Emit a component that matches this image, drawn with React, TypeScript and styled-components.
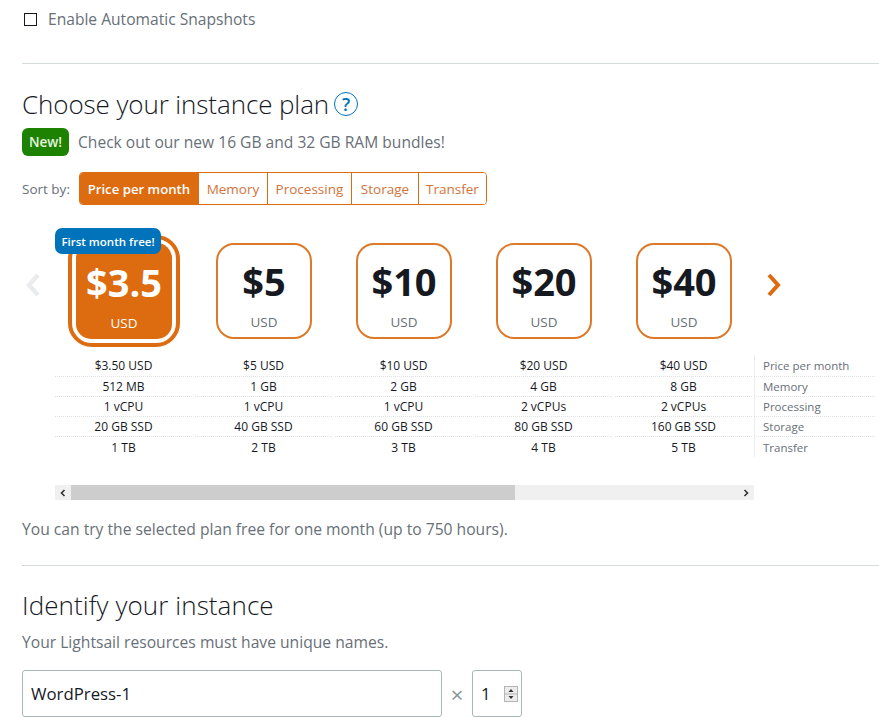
import React from "react";
import styled, { createGlobalStyle } from "styled-components";

const Global = createGlobalStyle`
  html, body { margin: 0; padding: 0; background: #fff; overflow: hidden; }
  body { font-family: "Open Sans", "Noto Sans", "Liberation Sans", sans-serif; color: #545b64; }
`;
const Page = styled.div`
  width: 879px; height: 718px; padding-left: 22px; box-sizing: border-box; overflow: hidden;
`;
const CheckRow = styled.label`
  display: flex; align-items: center; height: 38px; font-size: 15.6px; color: #687078;
`;
const CheckBox = styled.span`
  width: 11px; height: 11px; border: 1px solid #16191f; margin: 1px 11px 0 2px; display: block;
`;
const Rule = styled.hr<{ $top: number }>`
  border: 0; border-top: 1px solid #d5dbdb; margin: ${p => p.$top}px 0 0; height: 0;
`;
const Heading = styled.h2<{ $top: number; $spacing: number }>`
  margin: ${p => p.$top}px 0 0; font-weight: 300; font-size: 26px; letter-spacing: ${p => p.$spacing}px; line-height: 36px; color: #16191f;
  display: flex; align-items: center; gap: 5px;
`;
const Help = styled.span`
  width: 22px; height: 22px; border: 1.5px solid #0073bb; border-radius: 50%; color: #0073bb;
  display: flex; align-items: center; justify-content: center; font-size: 18px; font-weight: 600; line-height: 1;
  letter-spacing: 0;
`;
const NewRow = styled.div`
  display: flex; align-items: center; gap: 9px; margin-top: 6px; font-size: 15.6px; color: #687078;
`;
const Badge = styled.span`
  background: #1d8102; border-radius: 6px; width: 47px; height: 28px; font-size: 13.5px;
  font-weight: 600; display: flex; align-items: center; justify-content: center; color: #e4f5de;
`;
const SortRow = styled.div`
  display: flex; align-items: center; margin-top: 16px; font-size: 13.5px; color: #687078; gap: 9px;
`;
const Segments = styled.div`
  display: flex; height: 33px; border: 1px solid #dd6b10; border-radius: 4px; box-sizing: border-box; overflow: hidden;
`;
const Segment = styled.span<{ $on?: boolean; $w: number }>`
  width: ${p => p.$w}px; display: flex; align-items: center; justify-content: center; box-sizing: border-box;
  font-size: ${p => (p.$on ? 13.2 : 13.5)}px; white-space: nowrap;
  background: ${p => (p.$on ? "#dd6b10" : "#fff")}; color: ${p => (p.$on ? "#fff" : "#d2733a")};
  font-weight: ${p => (p.$on ? 600 : 400)};
  border-right: 1px solid #dd6b10;
  &:last-child { border-right: 0; }
`;
const Carousel = styled.div`
  display: grid; grid-template-columns: 32px repeat(5, 140px) 40px; margin-top: 30px; height: 112px; align-items: center;
`;
const Arrow = styled.svg<{ $push: number }>`
  width: 16px; height: 24px; display: block; margin-left: ${p => p.$push}px; margin-top: -12px;
`;
const CardSlot = styled.div`
  position: relative; display: flex; justify-content: center; align-items: center;
`;
const Card = styled.div`
  width: 96px; height: 96px; box-sizing: border-box; border: 2px solid #dd7a2a; border-radius: 18px;
  display: flex; flex-direction: column; align-items: center; background: #fff;
`;
const SelectedCard = styled.div`
  width: 112px; height: 112px; box-sizing: border-box; border: 4px solid #dd6b10; border-radius: 24px;
  padding: 4px; background: #fff;
`;
const SelectedFill = styled.div`
  box-sizing: border-box; height: 96px; background: #dd6b10; border-radius: 15px;
  display: flex; flex-direction: column; align-items: center;
`;
const Price = styled.div<{ $on?: boolean }>`
  font-size: 38px; font-weight: 700; line-height: 46px; margin-top: ${p => (p.$on ? 16 : 13)}px;
  color: ${p => (p.$on ? "#fff" : "#16191f")};
`;
const Unit = styled.div<{ $on?: boolean }>`
  font-size: 13.5px; line-height: 18px; margin-top: 9px;
  color: ${p => (p.$on ? "#fff" : "#687078")};
`;
const Promo = styled.span`
  position: absolute; left: 1px; top: -7px; height: 26px; width: 106px; background: #0073bb; color: #fff;
  border-radius: 7px; font-size: 11.5px; font-weight: 600; display: flex; align-items: center; justify-content: center;
  white-space: nowrap;
`;
const Table = styled.div`
  margin: 8px 0 0 33px;
`;
const SpecRow = styled.div<{ $h: number }>`
  display: grid; grid-template-columns: repeat(5, 140px) 120px; height: ${p => p.$h}px; align-items: center;
`;
const Cell = styled.div<{ $line: boolean }>`
  height: 100%; padding: 0 1px; box-sizing: border-box;
  display: flex; align-items: center; justify-content: center; font-size: 12px; color: #16191f;
  border-bottom: ${p => (p.$line ? "1px dotted #dfe3e3" : "0")};
  margin-right: 3px;
`;
const RowLabel = styled.div<{ $line: boolean }>`
  height: 100%; box-sizing: border-box; display: flex; align-items: center; padding-left: 8px; margin-left: -1px;
  font-size: 11.5px; color: #687078; border-left: 1px solid #eaeded;
  border-bottom: ${p => (p.$line ? "1px dotted #dfe3e3" : "0")};
`;
const ScrollTrack = styled.div`
  margin: 28px 0 0 33px; width: 699px; height: 15px; background: #f0f0f0; display: flex; align-items: center;
`;
const ScrollButton = styled.span`
  width: 16px; height: 15px; display: flex; align-items: center; justify-content: center; flex: none;
`;
const ScrollThumb = styled.span`
  width: 444px; height: 15px; background: #cdcdcd; flex: none;
`;
const ScrollGap = styled.span`
  flex: 1;
`;
const Note = styled.p<{ $top: number }>`
  margin: ${p => p.$top}px 0 0; font-size: 15.65px; line-height: 20px; color: #687078;
`;
const InputRow = styled.div`
  display: flex; align-items: center; margin-top: 18px;
`;
const NameInput = styled.div`
  width: 420px; height: 47px; box-sizing: border-box; border: 1px solid #aab7b8; border-radius: 3px;
  display: flex; align-items: center; padding-left: 8px; font-size: 16.8px; color: #16191f;
`;
const Times = styled.span`
  width: 30px; text-align: center; font-size: 22px; line-height: 1; color: #879596;
`;
const NumberInput = styled.div`
  width: 50px; height: 47px; box-sizing: border-box; border: 1px solid #aab7b8; border-radius: 3px;
  display: flex; align-items: center; justify-content: space-between; padding: 0 2px 0 8px; font-size: 16.8px; color: #16191f;
`;
const Spinner = styled.svg`
  width: 14px; height: 16px; display: block; margin-right: 1px;
`;

const plans = [
  { price: "$3.5", on: true, specs: ["$3.50 USD", "512 MB", "1 vCPU", "20 GB SSD", "1 TB"] },
  { price: "$5", specs: ["$5 USD", "1 GB", "1 vCPU", "40 GB SSD", "2 TB"] },
  { price: "$10", specs: ["$10 USD", "2 GB", "1 vCPU", "60 GB SSD", "3 TB"] },
  { price: "$20", specs: ["$20 USD", "4 GB", "2 vCPUs", "80 GB SSD", "4 TB"] },
  { price: "$40", specs: ["$40 USD", "8 GB", "2 vCPUs", "160 GB SSD", "5 TB"] },
];
const labels = ["Price per month", "Memory", "Processing", "Storage", "Transfer"];
const heights = [22, 20, 20, 20, 20];
const sorts = [
  { t: "Price per month", w: 119, on: true }, { t: "Memory", w: 69 }, { t: "Processing", w: 84 },
  { t: "Storage", w: 67 }, { t: "Transfer", w: 67 },
];

export default function App() {
  return (
    <Page>
      <Global />
      <CheckRow><CheckBox />Enable Automatic Snapshots</CheckRow>
      <Rule $top={25} />
      <Heading $top={22} $spacing={-0.1}>Choose your instance plan<Help>?</Help></Heading>
      <NewRow><Badge>New!</Badge>Check out our new 16 GB and 32 GB RAM bundles!</NewRow>
      <SortRow>
        Sort by:
        <Segments>
          {sorts.map(s => <Segment key={s.t} $w={s.w} $on={s.on}>{s.t}</Segment>)}
        </Segments>
      </SortRow>
      <Carousel>
        <Arrow $push={2} viewBox="0 0 16 24"><path d="M14 2 L5 12 L14 22" fill="none" stroke="#e9ebed" strokeWidth="4.5" /></Arrow>
        {plans.map(p => (
          <CardSlot key={p.price}>
            {p.on ? (
              <>
                <SelectedCard>
                  <SelectedFill><Price $on>{p.price}</Price><Unit $on>USD</Unit></SelectedFill>
                </SelectedCard>
                <Promo>First month free!</Promo>
              </>
            ) : (
              <Card><Price>{p.price}</Price><Unit>USD</Unit></Card>
            )}
          </CardSlot>
        ))}
        <Arrow $push={12} viewBox="0 0 16 24"><path d="M3 2 L12 12 L3 22" fill="none" stroke="#dd6b10" strokeWidth="4" /></Arrow>
      </Carousel>
      <Table>
        {labels.map((l, i) => (
          <SpecRow key={l} $h={heights[i]}>
            {plans.map(p => <Cell key={p.price} $line={i < 4}>{p.specs[i]}</Cell>)}
            <RowLabel $line={i < 4}>{l}</RowLabel>
          </SpecRow>
        ))}
      </Table>
      <ScrollTrack>
        <ScrollButton><svg width="8" height="8" viewBox="0 0 8 8"><path d="M5.5 1 L2.5 4 L5.5 7" fill="none" stroke="#333" strokeWidth="1.6" /></svg></ScrollButton>
        <ScrollThumb />
        <ScrollGap />
        <ScrollButton><svg width="8" height="8" viewBox="0 0 8 8"><path d="M2.5 1 L5.5 4 L2.5 7" fill="none" stroke="#333" strokeWidth="1.6" /></svg></ScrollButton>
      </ScrollTrack>
      <Note $top={19}>You can try the selected plan free for one month (up to 750 hours).</Note>
      <Rule $top={26} />
      <Heading $top={21} $spacing={0.08}>Identify your instance</Heading>
      <Note $top={9}>Your Lightsail resources must have unique names.</Note>
      <InputRow>
        <NameInput>WordPress-1</NameInput>
        <Times>×</Times>
        <NumberInput>
          1
          <Spinner viewBox="0 0 14 16">
            <rect x="0.5" y="0.5" width="13" height="15" fill="#ececec" stroke="#b5b5b5" />
            <rect x="0" y="7.5" width="14" height="1" fill="#b5b5b5" />
            <path d="M7 3 L9.5 6 H4.5 Z M7 13 L9.5 10 H4.5 Z" fill="#333" />
          </Spinner>
        </NumberInput>
      </InputRow>
    </Page>
  );
}
